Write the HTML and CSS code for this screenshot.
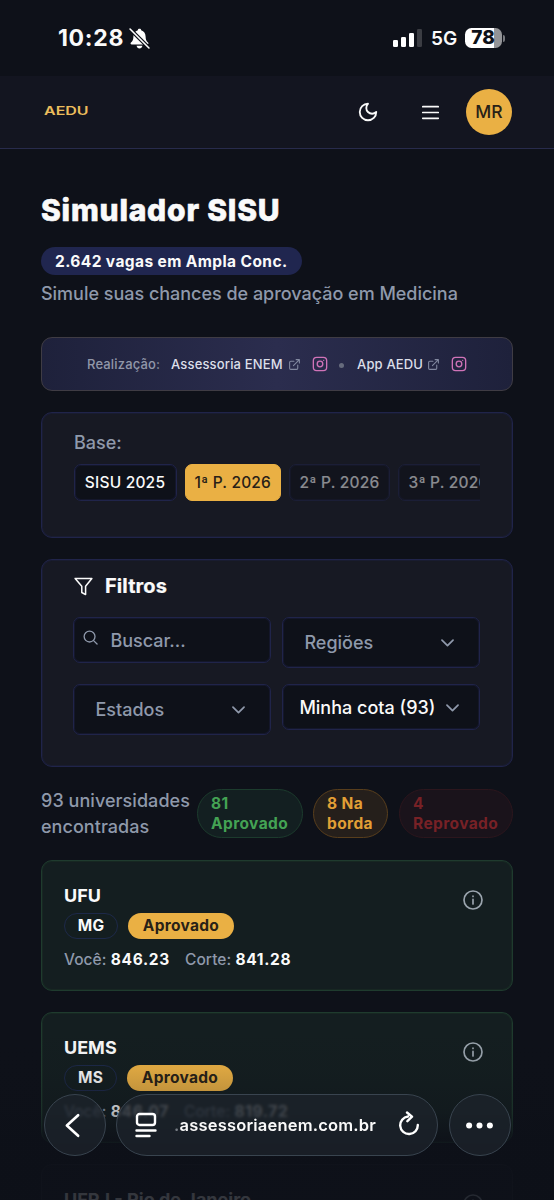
FILE: index.html
```html
<!DOCTYPE html>
<html lang="pt-BR">
<head>
<meta charset="utf-8">
<title>Simulador SISU</title>
<link rel="stylesheet" href="styles.css">
</head>
<body>
<svg class="defs" aria-hidden="true">
  <symbol id="chevron" viewBox="0 0 24 24"><path d="m5 9 7 7 7-7"/></symbol>
  <symbol id="external" viewBox="0 0 24 24"><path d="M18 13v6a2 2 0 0 1-2 2H5a2 2 0 0 1-2-2V8a2 2 0 0 1 2-2h6M15 3h6v6M10 14 21 3"/></symbol>
  <symbol id="instagram" viewBox="0 0 24 24"><rect x="2" y="2" width="20" height="20" rx="5"/><circle cx="12" cy="12" r="4.2"/><path d="M17.5 6.5h.01"/></symbol>
  <symbol id="info" viewBox="0 0 24 24"><circle cx="12" cy="12" r="10.8"/><path d="M12 11.3v5.4M12 7.4v.3"/></symbol>
</svg>
<div class="screen">
  <div class="status">
    <div class="status-left"><span class="clock">10:28</span>
      <svg class="bell" viewBox="0 0 20 20"><path fill="#fff" d="M10 .8c-.9 0-1.500.5-1.600 1.300C5.700 2.900 4.300 5 4.200 8c-.1 3.200-.8 4.500-2.300 5.900-.7.7-.6 1.900.8 1.900h14.600c1.400 0 1.500-1.200.8-1.900-1.500-1.400-2.200-2.700-2.300-5.900-.1-3-1.500-5.100-4.200-5.900C11.500 1.300 10.900.8 10 .8ZM7.200 17h5.600c-.3 1.600-1.300 2.500-2.800 2.500S7.500 18.600 7.200 17Z"/><path d="m1 1 18 18" stroke="#0e1119" stroke-width="3.600"/><path d="m1 1 18 18" stroke="#fff" stroke-width="1.500" stroke-linecap="round"/></svg>
    </div>
    <div class="status-right">
      <svg class="signal" viewBox="0 0 29 18" fill="#fff"><rect x="0" y="11" width="5" height="7" rx="1.300"/><rect x="8" y="8" width="5" height="10" rx="1.300"/><rect x="16" y="4" width="5" height="14" rx="1.300"/><rect x="24" y="0" width="5" height="18" rx="1.300" fill="#3b3d43"/></svg>
      <span class="net">5G</span>
      <span class="battery">78</span><span class="battery-tip"></span>
    </div>
  </div>
  <header class="header">
    <span class="logo">AEDU</span>
    <svg class="icon moon" viewBox="0 0 24 24"><path d="M12 3a6 6 0 0 0 9 9 9 9 0 1 1-9-9Z"/></svg>
    <svg class="icon burger" viewBox="0 0 16 14"><path d="M.7 1.500h14.600M.7 7h14.600M.7 12.500h14.600"/></svg>
    <span class="avatar">MR</span>
  </header>
  <main class="main">
    <h1 class="title">Simulador SISU</h1>
    <div class="vacancies">2.642 vagas em Ampla Conc.</div>
    <p class="subtitle">Simule suas chances de aprovação em Medicina</p>
    <section class="credits">
      <span class="credits-label">Realização:</span>
      <span class="credits-name enem">Assessoria ENEM</span>
      <svg class="icon ext"><use href="#external"/></svg>
      <svg class="icon insta"><use href="#instagram"/></svg>
      <span class="dot"></span>
      <span class="credits-name app">App AEDU</span>
      <svg class="icon ext"><use href="#external"/></svg>
      <svg class="icon insta"><use href="#instagram"/></svg>
    </section>
    <section class="panel base">
      <div class="base-label">Base:</div>
      <div class="tabs">
        <span class="tab first">SISU 2025</span><span class="tab active">1ª P. 2026</span><span class="tab disabled">2ª P. 2026</span><span class="tab disabled">3ª P. 2026</span>
      </div>
    </section>
    <section class="panel filters">
      <h2 class="filters-title"><svg class="icon funnel" viewBox="0 0 20 20"><path d="M1.200 1.500h17.600l-6.600 8.300v8.700l-4-2.200V9.800L1.200 1.500Z"/></svg><span>Filtros</span></h2>
      <div class="filter-grid">
        <div class="field search"><svg class="icon lens" viewBox="0 0 16 16"><circle cx="7" cy="7" r="5.800"/><path d="m11.300 11.300 3.700 3.700"/></svg><span class="buscar">Buscar...</span></div>
        <div class="field select"><span>Regiões</span><svg class="icon chev"><use href="#chevron"/></svg></div>
        <div class="field select"><span>Estados</span><svg class="icon chev"><use href="#chevron"/></svg></div>
        <div class="field quota"><span>Minha cota (93)</span><svg class="icon chev"><use href="#chevron"/></svg></div>
      </div>
    </section>
    <section class="summary">
      <div class="count">93 universidades<br>encontradas</div>
      <div class="pill ok">81<br>Aprovado</div>
      <div class="pill edge">8 Na<br>borda</div>
      <div class="pill fail">4<br>Reprovado</div>
    </section>
    <article class="uni">
      <div><h3 class="uni-name">UFU</h3>
      <div class="tags"><span class="tag uf">MG</span><span class="tag passed">Aprovado</span></div>
      <div class="scores"><span>Você: <b>846.23</b></span><span>Corte: <b>841.28</b></span></div></div>
      <svg class="icon info"><use href="#info"/></svg>
    </article>
    <article class="uni">
      <div><h3 class="uni-name">UEMS</h3>
      <div class="tags"><span class="tag uf ms">MS</span><span class="tag passed">Aprovado</span></div>
      <div class="scores"><span>Você: <b>846.07</b></span><span>Corte: <b>819.72</b></span></div></div>
      <svg class="icon info"><use href="#info"/></svg>
    </article>
    <article class="uni last">
      <div><h3 class="uni-name">UFRJ - Rio de Janeiro</h3></div>
      <svg class="icon info"><use href="#info"/></svg>
    </article>
  </main>
  <div class="fade"></div>
  <nav class="browser-bar">
    <div class="glass round"><svg class="glyph back" viewBox="0 0 16 26"><path d="M14 2 2 13l12 11"/></svg></div>
    <div class="glass address">
      <svg class="glyph reader" viewBox="0 0 22 26"><rect x="2" y="2" width="18" height="11" rx="2.500"/><path d="M1.500 18.500h19M1.500 24h13"/></svg>
      <span class="url"><i>.</i>assessoriaenem.com.br</span>
      <svg class="glyph reload" viewBox="0 0 22 26"><path d="M10 5.500A8.800 8.800 0 1 0 19.800 14M9 1.500l5 4.200-4.600 4.500"/></svg>
    </div>
    <div class="glass round"><svg class="more" viewBox="0 0 26 6" fill="#fff"><circle cx="3" cy="3" r="2.900"/><circle cx="13" cy="3" r="2.900"/><circle cx="23" cy="3" r="2.900"/></svg></div>
  </nav>
</div>
</body>
</html>
```
FILE: styles.css
```css
* { box-sizing: border-box; }
body { margin: 0; background: #0e1119; color: #fafafa; font-family: Inter, "Open Sans", sans-serif; font-weight: 500; }
h1, h2, h3, p { margin: 0; }
.defs { position: absolute; width: 0; height: 0; }
.screen { position: relative; width: 554px; height: 1200px; overflow: hidden; background: #0e1119; white-space: nowrap; }
.icon { fill: none; stroke: #fafafa; stroke-width: 2; stroke-linecap: round; stroke-linejoin: round; flex: none; }

.status { height: 76px; display: flex; justify-content: space-between; padding: 0 49px 0 58px; }
.status-left, .status-right { display: flex; align-items: center; height: 76px; }
.clock { font-size: 23px; font-weight: 700; letter-spacing: .7px; width: 71px; }
.bell { width: 21px; height: 21px; }
.signal { width: 29px; height: 18px; margin-right: 9px; }
.net { font-size: 19px; font-weight: 600; width: 34px; }
.battery { width: 37px; height: 20px; border-radius: 6.500px; background: linear-gradient(90deg, #fff 78%, #939497 78%); color: #0e1119; font-size: 19px; font-weight: 800; line-height: 20px; text-align: center; padding-right: 1px; }
.battery-tip { width: 2px; height: 7px; margin-left: 1px; border-radius: 0 3px 3px 0; background: #77797e; }

.header { height: 73px; display: flex; align-items: center; padding: 0 42px 0 44px; background: #131520; border-bottom: 1px solid #282b4c; margin-bottom: 1px; }
.logo { width: 45px; font-size: 11.500px; font-weight: 600; line-height: 14px; color: #ecbd5c; transform: scaleX(1.390); transform-origin: left; margin-top: -3px; }
.moon { width: 22px; height: 22px; margin-left: 268px; }
.burger { width: 17px; height: 15px; margin-left: 43px; stroke-width: 1.600; }
.avatar { width: 46px; height: 46px; border-radius: 50%; background: #eab044; color: #282117; font-size: 17.500px; line-height: 46px; text-align: center; margin-left: auto; }

.main { padding: 42px 41px 0; }
.title { font-size: 30px; font-weight: 800; letter-spacing: .8px; line-height: 36px; height: 55px; -webkit-text-stroke: .6px #fafafa; }
.vacancies { width: 261px; height: 28px; border-radius: 14px; background: #20264f; font-size: 15.500px; font-weight: 700; letter-spacing: .4px; line-height: 29px; padding-left: 14px; }
.subtitle { color: #8f99ab; font-size: 18px; letter-spacing: -.02px; line-height: 26px; height: 62px; padding-top: 6px; }
.credits { height: 54px; display: flex; align-items: center; border: 1px solid #3f3c44; border-radius: 11px; background: linear-gradient(90deg, #1e213b, #2b2d4e 50%, #1e213b); padding-left: 45px; font-size: 13px; letter-spacing: .16px; }
.credits-label { width: 84px; color: #9197a9; }
.credits-name { color: #dcdfe9; }
.enem { width: 117px; }
.app { width: 70px; }
.ext { width: 13px; height: 13px; stroke: #8289a0; }
.insta { width: 16px; height: 16px; stroke: #d073b8; margin-left: 11px; }
.dot { width: 5px; height: 5px; border-radius: 50%; background: #666b7d; margin: 3px 13px 0 11px; }

.panel { border: 1px solid #20244a; box-shadow: inset 0 0 0 1px #191c30; border-radius: 11px; background: #171923; margin-top: 21px; padding: 0 32px; }
.base { height: 126px; padding-top: 17px; }
.base-label { color: #8f99ab; font-size: 18px; line-height: 26px; margin-bottom: 8px; }
.tabs { display: flex; gap: 8px; overflow: hidden; margin-left: -.5px; }
.tab { flex: none; width: 101px; height: 37px; border: 1px solid #20244a; box-shadow: inset 0 0 0 1px #14172b; border-radius: 7px; background: #0e1119; font-size: 15.500px; letter-spacing: .2px; line-height: 36px; text-align: center; }
.first { width: 103px; }
.active { width: 96.500px; border-color: #eab044; box-shadow: none; background: #eab044; color: #282117; }
.disabled { opacity: .5; }
.filters { height: 208px; }
.filters-title { display: flex; align-items: center; gap: 12px; height: 57px; padding-bottom: 5px; font-size: 20px; font-weight: 700; letter-spacing: .1px; -webkit-text-stroke: .2px #fafafa; }
.funnel { width: 19px; height: 19px; stroke-width: 1.600; }
.filter-grid { display: grid; grid-template-columns: 198px 198px; gap: 16px 11px; align-items: start; color: #8f99ab; font-size: 18px; margin-left: -.6px; }
.field { height: 51px; display: flex; align-items: center; border: 1px solid #20244a; box-shadow: inset 0 0 0 1px #14172b; border-radius: 7px; background: #0e1119; }
.search { height: 46px; padding-left: 10px; }
.lens { width: 15px; height: 15px; stroke: #8f99ab; stroke-width: 1.400; margin: -5px 0 0 -1px; }
.buscar { margin-left: 12px; }
.select { justify-content: space-between; padding: 0 22px 0 21px; }
.chev { width: 19px; height: 19px; stroke: #8f99ab; stroke-width: 2.200; }
.quota { height: 46px; justify-content: space-between; padding: 0 17px 0 16px; color: #fafafa; }

.summary { height: 50px; margin-top: 21px; display: flex; align-items: center; }
.count { width: 156px; font-size: 18px; letter-spacing: .05px; line-height: 26px; padding-top: 2px; color: #8f99ab; }
.pill { height: 49px; border: 1px solid; border-radius: 25px; padding: 4px 0 0 13px; font-size: 15.500px; letter-spacing: .4px; font-weight: 700; line-height: 20.500px; }
.ok { width: 106px; color: #44a354; background: #131f21; border-color: #1c3b2d; }
.edge { width: 75px; margin-left: 10px; color: #e29f35; background: #251f1b; border-color: #583e1c; }
.fail { width: 114px; margin-left: 11px; color: #772126; background: #1a131b; border-color: #2c161d; }
.uni { height: 131px; margin-top: 21px; display: flex; justify-content: space-between; padding: 25px 29px 0 22px; border: 1px solid #1f3b2e; box-shadow: inset 0 0 0 1px #172722; border-radius: 11px; background: #141e20; }
.summary + .uni { margin-top: 22px; }
.uni-name { font-size: 18px; font-weight: 700; line-height: 19px; }
.tags { display: flex; gap: 10px; margin-top: 8px; }
.tag { height: 26px; border-radius: 13px; font-size: 15.500px; letter-spacing: .3px; font-weight: 700; line-height: 26px; text-align: center; }
.uf { width: 54px; border: 1px solid #1d2949; line-height: 24px; }
.ms { width: 53px; }
.passed { width: 106px; color: #282117; background: #eab044; }
.scores { display: flex; gap: 15px; margin-top: 11px; color: #8f99ab; font-size: 15.500px; letter-spacing: .05px; line-height: 20px; }
.scores b { color: #fafafa; font-weight: 700; letter-spacing: .7px; }
.info { width: 20px; height: 20px; stroke: #9ba5ae; margin-top: 4px; }
.last { background: #12151e; border-color: #20232d; box-shadow: none; }

.fade { position: absolute; left: 0; right: 0; bottom: 0; height: 175px; background: linear-gradient(#0d101800, #0d101810 25%, #0d101848 50%, #0d1018cc 65%, #0d1018dd 80%, #0d1018d4); }
.browser-bar { position: absolute; left: 43.500px; top: 1094px; width: 467px; height: 62px; display: flex; justify-content: space-between; }
.glass { display: flex; align-items: center; height: 62px; border: 1px solid #39444f; border-radius: 31px; background: #1c232bc4; backdrop-filter: blur(1.500px); }
.round { width: 62px; justify-content: center; }
.address { width: 322px; padding: 0 17px 0 18px; }
.glyph { fill: none; stroke: #fff; stroke-width: 2.800; stroke-linecap: round; stroke-linejoin: round; }
.back { width: 15px; height: 25px; margin-right: 4px; }
.reader { width: 22px; height: 26px; stroke-width: 2.400; }
.url { margin-left: 17px; font-size: 16.500px; letter-spacing: .2px; font-weight: 600; }
.url i { font-style: normal; color: #777d84; }
.reload { width: 22px; height: 26px; margin: -2px 0 0 auto; stroke-width: 2.400; }
.more { width: 27px; height: 7px; }
```
